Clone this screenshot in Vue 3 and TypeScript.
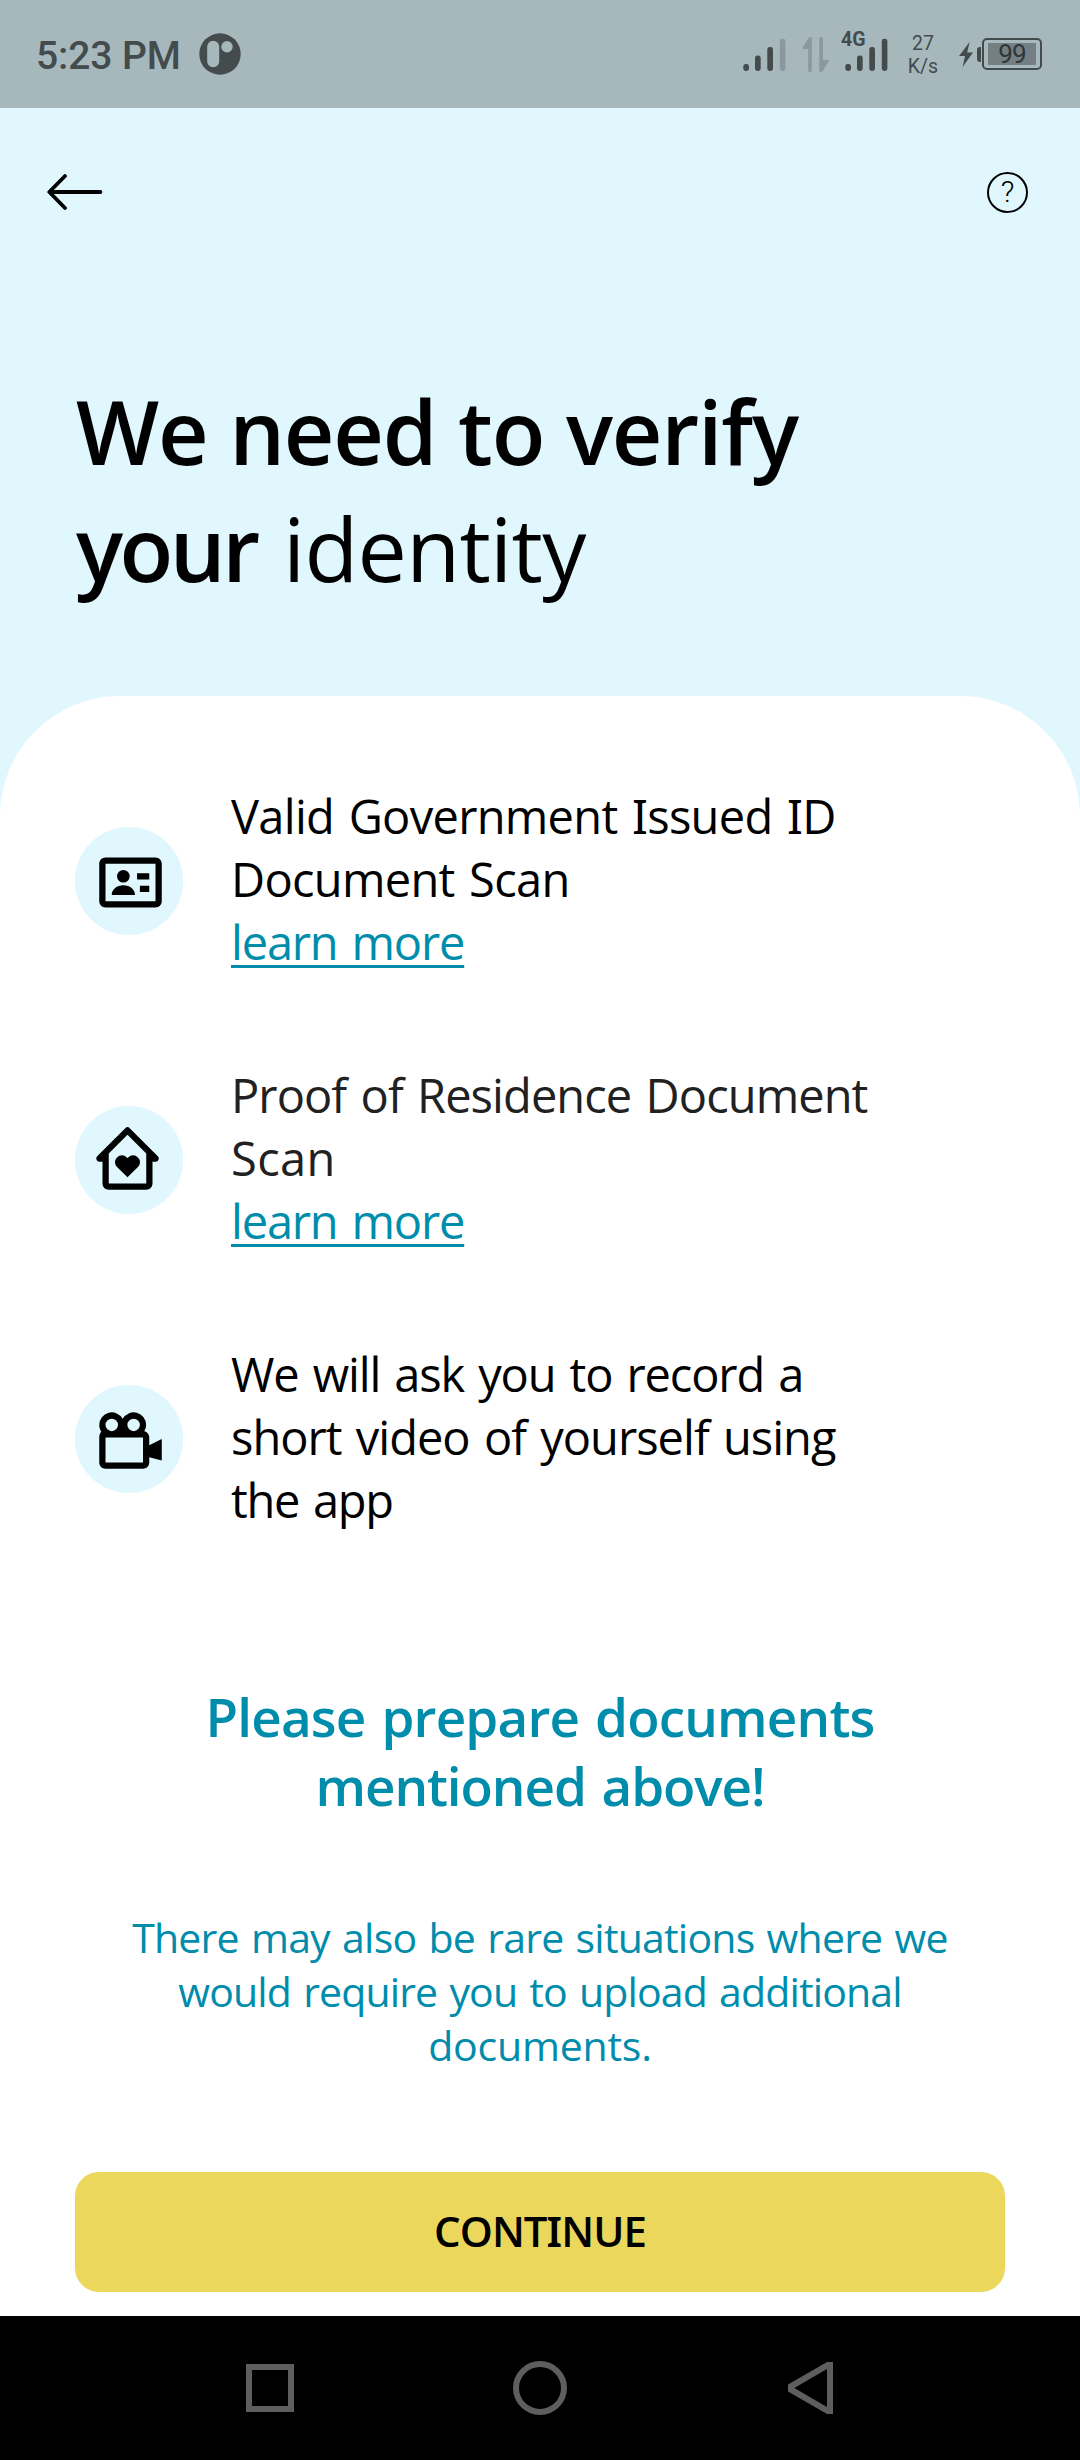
<script setup lang="ts">
interface Line {
  text: string
  tracking: number
}

interface Requirement {
  icon: 'id' | 'home' | 'video'
  lines: Line[]
  link?: string
  muted?: boolean
}

const requirements: Requirement[] = [
  {
    icon: 'id',
    lines: [
      { text: 'Valid Government Issued ID', tracking: -0.7 },
      { text: 'Document Scan', tracking: -0.7 },
    ],
    link: 'learn more',
  },
  {
    icon: 'home',
    muted: true,
    lines: [
      { text: 'Proof of Residence Document', tracking: -0.92 },
      { text: 'Scan', tracking: 0.4 },
    ],
    link: 'learn more',
  },
  {
    icon: 'video',
    lines: [
      { text: 'We will ask you to record a', tracking: -1.12 },
      { text: 'short video of yourself using', tracking: -0.98 },
      { text: 'the app', tracking: -1.3 },
    ],
  },
]

const glyphRuns = (text: string): string[] => text.split(/(I)/).filter((run) => run !== '')
</script>

<template>
  <div class="screen">
    <header class="status">
      <div class="status-left">
        <span class="clock">5:23 PM</span>
        <svg class="app-badge" width="42" height="42" viewBox="0 0 42 42">
          <circle cx="21" cy="21" r="20.7" fill="#434b4d" />
          <rect x="8.2" y="7.7" width="12" height="26.6" rx="6" fill="#a7b8bd" />
          <circle cx="28" cy="13.8" r="5.7" fill="#a7b8bd" />
        </svg>
      </div>
      <div class="status-right">
        <svg class="signal" width="43" height="34" viewBox="0 0 43 34">
          <g fill="#434b4d">
            <rect x="0.3" y="26" width="5.7" height="7" rx="2.4" />
            <rect x="12" y="17.5" width="5.7" height="15.5" rx="2.4" />
            <rect x="24.3" y="9" width="5.7" height="24" rx="2.4" />
          </g>
          <rect x="36.8" y="0.8" width="5.6" height="32.2" rx="2.4" fill="#8b989d" />
        </svg>
        <svg class="arrows" width="28" height="37" viewBox="0 0 28 37">
          <path d="M6.3 2.6Q7.3 0.6 9.8 1V34.5Q9.8 36 8 36T6.2 34.5V13H1Q0 12.6 0.6 11.6Z" fill="#8b989d" />
          <path d="M17.3 2.5Q17.3 1 19.1 1T20.9 2.5V24H26.3Q27.3 24.4 26.7 25.4L21 34.4Q20 36.4 17.3 36Z" fill="#8b989d" />
        </svg>
        <div class="cell">
          <span class="network">4G</span>
          <svg width="43" height="34" viewBox="0 0 43 34">
            <g fill="#434b4d">
              <rect x="0.3" y="26" width="5.7" height="7" rx="2.4" />
              <rect x="12" y="17.5" width="5.7" height="15.5" rx="2.4" />
              <rect x="24.3" y="9" width="5.7" height="24" rx="2.4" />
              <rect x="36.8" y="0.8" width="5.6" height="32.2" rx="2.4" />
            </g>
          </svg>
        </div>
        <div class="speed">
          <span>27</span>
          <span>K/s</span>
        </div>
        <svg class="bolt" width="14" height="25" viewBox="0 0 14 25">
          <path d="M10.6 0L0 14H6L3.6 25L14 10.6H8.2Z" fill="#434b4d" />
        </svg>
        <div class="battery">
          <div class="battery-nub"></div>
          <div class="battery-body">
            <div class="battery-fill">99</div>
          </div>
        </div>
      </div>
    </header>

    <nav class="toolbar">
      <svg width="56" height="38" viewBox="0 0 56 38">
        <path
          d="M53.4 19H3M18 3L2.3 19L18 35"
          fill="none"
          stroke="#000"
          stroke-width="3.8"
          stroke-linecap="round"
          stroke-linejoin="round"
        />
      </svg>
      <span class="help">?</span>
    </nav>

    <h1 class="title">
      <span class="title-line">We need to verify</span>
      <span class="title-line second">your <span class="light">identity</span></span>
    </h1>

    <main class="sheet">
      <ul class="list">
        <li v-for="item in requirements" :key="item.icon" class="row" :class="{ muted: item.muted }">
          <div class="bubble">
            <svg v-if="item.icon === 'id'" class="glyph" viewBox="0 0 24 24">
              <path
                d="M20 4H4c-1.103 0-2 .897-2 2v12c0 1.103.897 2 2 2h16c1.103 0 2-.897 2-2V6c0-1.103-.897-2-2-2zM4 18V6h16l.001 12H4z"
              />
              <circle cx="9.715" cy="10" r="2.02" />
              <path d="M6 16c0-1.77 1.66-3.1 3.72-3.1s3.72 1.33 3.72 3.1zM14.1 9H18v2h-3.9zM15 13h3v2h-3z" />
            </svg>
            <svg v-else-if="item.icon === 'home'" class="glyph home" viewBox="0 0 24 24">
              <path
                d="m12.223 11.641-.223.22-.224-.22a2.224 2.224 0 0 0-3.125 0 2.13 2.13 0 0 0 0 3.07L12 18l3.349-3.289a2.13 2.13 0 0 0 0-3.07 2.225 2.225 0 0 0-3.126 0z"
              />
              <path
                d="m21.707 11.293-9-9a.999.999 0 0 0-1.414 0l-9 9A1 1 0 0 0 3 13h1v7c0 1.103.897 2 2 2h12c1.103 0 2-.897 2-2v-7h1a1 1 0 0 0 .707-1.707zM18.001 20H6v-9.585l6-6 6 6V15l.001 5z"
              />
            </svg>
            <svg v-else class="glyph" viewBox="0 0 24 24">
              <path
                fill-rule="evenodd"
                d="M18 11c0-.96-.68-1.76-1.59-1.95A3.98 3.98 0 0 0 17 7a4 4 0 0 0-7.5-1.94A4 4 0 0 0 2 7c0 .8.24 1.53.64 2.16C2.25 9.53 2 10.24 2 11v8c0 1.1.9 2 2 2h12c1.1 0 2-.9 2-2v-1.65l4 1.05v-6.9l-4 2.05zM13 5a2 2 0 1 1 0 4 2 2 0 0 1 0-4zM6 5a2 2 0 1 1 0 4 2 2 0 0 1 0-4zM4 19v-8h12v8z"
              />
            </svg>
          </div>
          <div class="copy">
            <span
              v-for="line in item.lines"
              :key="line.text"
              class="line"
              :style="{ letterSpacing: line.tracking + 'px' }"
              ><span v-for="(run, i) in glyphRuns(line.text)" :key="i" :class="{ serif: run === 'I' }">{{ run }}</span></span
            >
            <a v-if="item.link" class="link">{{ item.link }}</a>
          </div>
        </li>
      </ul>

      <h2 class="notice">
        <span class="notice-line">Please prepare documents</span>
        <span class="notice-line second">mentioned above!</span>
      </h2>

      <p class="hint">
        <span>There may also be rare situations where we</span>
        <span class="middle">would require you to upload additional</span>
        <span class="last">documents.</span>
      </p>

      <button class="cta">CONT<span class="serif">I</span>NUE</button>
    </main>

    <footer class="navbar">
      <svg width="48" height="48" viewBox="0 0 48 48">
        <rect x="3" y="3" width="42" height="42" fill="none" stroke="#5e5e5e" stroke-width="6" />
      </svg>
      <svg class="nav-home" width="54" height="54" viewBox="0 0 54 54">
        <circle cx="27" cy="27" r="24" fill="none" stroke="#5e5e5e" stroke-width="6" />
      </svg>
      <svg width="45" height="52" viewBox="0 0 45 52">
        <path fill="#5e5e5e" fill-rule="evenodd" d="M39 0H45V52H39L0 29.5V22.5ZM39 7L6.3 26L39 45Z" />
      </svg>
    </footer>
  </div>
</template>

<style>
body {
  margin: 0;
}
</style>

<style scoped>
.screen {
  width: 1080px;
  height: 2460px;
  display: flex;
  flex-direction: column;
  overflow: hidden;
  background: #e0f7fe;
  color: #000;
  font-family: 'Open Sans', sans-serif;
}

.status {
  flex: none;
  height: 108px;
  box-sizing: border-box;
  padding: 0 38px 0 36px;
  display: flex;
  justify-content: space-between;
  background: #a7b8bd;
  color: #434b4d;
  font-family: Roboto, sans-serif;
}

.status-left,
.status-right {
  display: flex;
  align-items: flex-start;
}

.clock {
  width: 145px;
  margin-top: 33px;
  font-size: 39px;
  line-height: 46px;
  font-weight: 500;
  letter-spacing: -0.1px;
  white-space: nowrap;
}

.app-badge {
  margin: 33px 0 0 18px;
}

.signal {
  margin-top: 38px;
}

.arrows {
  margin: 36px 0 0 16px;
}

.cell {
  position: relative;
  margin: 38px 0 0 15px;
}

.cell svg,
.signal {
  display: block;
}

.network {
  position: absolute;
  left: -4px;
  top: -9px;
  font-size: 19.5px;
  line-height: 22px;
  font-weight: 700;
}

.speed {
  width: 36px;
  margin: 32px 0 0 17px;
  display: flex;
  flex-direction: column;
  align-items: center;
  font-size: 19.5px;
  line-height: 23px;
  white-space: nowrap;
}

.bolt {
  margin: 42px 0 0 18px;
}

.battery {
  display: flex;
  align-items: center;
  margin: 38px 0 0 4px;
  height: 32px;
}

.battery-nub {
  width: 4px;
  height: 15px;
  margin-right: 1px;
  border-radius: 3px 0 0 3px;
  background: #434b4d;
}

.battery-body {
  width: 60px;
  height: 32px;
  box-sizing: border-box;
  padding: 3px 4px;
  border: 2px solid #434b4d;
  border-radius: 5px;
}

.battery-fill {
  height: 22px;
  border-radius: 1px;
  background: #747f84;
  color: #2f3638;
  font-size: 26px;
  line-height: 22px;
  letter-spacing: -0.8px;
  text-align: center;
}

.toolbar {
  flex: none;
  height: 168px;
  padding: 0 52px 0 47px;
  display: flex;
  align-items: center;
  justify-content: space-between;
}

.help {
  width: 41px;
  height: 41px;
  box-sizing: border-box;
  border: 2px solid #000;
  border-radius: 50%;
  font: 300 30px/36px Roboto, sans-serif;
  text-align: center;
}

.title {
  flex: none;
  height: 323px;
  margin: 97px 0 0 76px;
  font-size: 88px;
  line-height: 117px;
  font-weight: 600;
}

.title-line {
  display: block;
  white-space: pre;
  letter-spacing: -1.2px;
}

.title-line.second {
  letter-spacing: -3.5px;
  word-spacing: 7px;
}

.light {
  font-weight: 400;
  letter-spacing: -0.75px;
}

.sheet {
  flex: none;
  height: 1620px;
  box-sizing: border-box;
  padding: 89px 75px 0;
  display: flex;
  flex-direction: column;
  border-radius: 120px 120px 0 0;
  background: #fff;
}

.list {
  margin: 0;
  padding: 0;
  list-style: none;
  display: flex;
  flex-direction: column;
  gap: 90px;
}

.row {
  height: 189px;
  display: flex;
  align-items: center;
  gap: 48px;
}

.bubble {
  flex: none;
  width: 108px;
  height: 108px;
  margin-top: 3px;
  border-radius: 50%;
  background: #e0f7fe;
}

.glyph {
  display: block;
  width: 75px;
  height: 75px;
  margin: 17.75px 0 0 17.75px;
}

.glyph.home {
  margin: 14.75px 0 0 15px;
}

.copy {
  display: flex;
  flex-direction: column;
  align-items: flex-start;
  font-size: 47px;
  line-height: 63px;
  word-spacing: 3px;
  white-space: pre;
}

.line {
  display: block;
}

.muted .line {
  color: #212121;
}

.serif {
  font-family: 'Noto Sans', sans-serif;
}

.link {
  color: #008cab;
  letter-spacing: -1.18px;
  text-decoration: underline;
  text-decoration-thickness: 3px;
  text-underline-offset: 5px;
  text-decoration-skip-ink: none;
}

.notice {
  margin: 150px 0 0;
  color: #008cab;
  font-size: 53px;
  line-height: 69px;
  font-weight: 600;
  text-align: center;
  word-spacing: 3px;
}

.notice-line {
  display: block;
  letter-spacing: -0.83px;
}

.notice-line.second {
  letter-spacing: -1.08px;
}

.hint {
  margin: 90px 0 0;
  color: #008cab;
  font-size: 41px;
  line-height: 54px;
  text-align: center;
  word-spacing: 2.4px;
}

.hint span {
  display: block;
  letter-spacing: -0.8px;
}

.hint .middle {
  letter-spacing: -0.87px;
}

.hint .last {
  letter-spacing: -0.2px;
}

.cta {
  flex: none;
  height: 120px;
  margin: 100px 0 0;
  padding: 0 0 2px;
  border: 0;
  border-radius: 24px;
  background: #ebd75c;
  color: #000;
  font: 600 42px/56px 'Open Sans', sans-serif;
  letter-spacing: -0.95px;
}

.navbar {
  flex: none;
  height: 144px;
  box-sizing: border-box;
  padding: 0 247px 0 246px;
  display: flex;
  align-items: center;
  justify-content: space-between;
  background: #000;
}

.nav-home {
  margin-right: 2px;
}
</style>
